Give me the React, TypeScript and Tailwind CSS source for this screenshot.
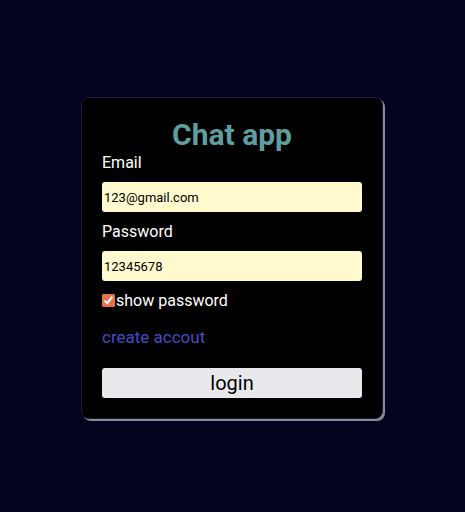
import * as React from 'react';
import { useState } from 'react';

const App: React.FC = () => {
  const [email, setEmail] = useState('123@gmail.com');
  const [password, setPassword] = useState('12345678');
  const [showPassword, setShowPassword] = useState(true);

  return (
    <div className="min-h-screen w-full bg-[#03021f] flex justify-center pt-[97px] pr-[1px] font-['Roboto',sans-serif]">
      <div className="w-[302px] h-[322px] bg-black rounded-lg border border-[#1c1c3a] shadow-[2px_2px_0_#8a8a96] px-5 pt-[19px] flex flex-col">
        <h1 className="text-[30px] leading-[35px] font-bold text-[#5f9ea0] text-center">Chat app</h1>
        <label className="mt-[1px] text-white text-base leading-[19px]">Email</label>
        <input
          value={email}
          onChange={e => setEmail(e.target.value)}
          className="mt-[10px] h-[30px] w-full bg-[#fffacd] rounded-[3px] px-[2px] text-[13px] text-black outline-none"
        />
        <label className="mt-[10px] text-white text-base leading-[19px]">Password</label>
        <input
          type={showPassword ? 'text' : 'password'}
          value={password}
          onChange={e => setPassword(e.target.value)}
          className="mt-[10px] h-[30px] w-full bg-[#fffacd] rounded-[3px] px-[2px] text-[13px] text-black outline-none"
        />
        <label className="mt-[10px] flex items-center text-white text-base leading-[19px]">
          <input
            type="checkbox"
            checked={showPassword}
            onChange={e => setShowPassword(e.target.checked)}
            className="w-[13px] h-[13px] m-0 mr-[1px] accent-[#e9704b]"
          />
          show password
        </label>
        <a href="#" className="mt-[17px] text-[#4a4ac6] text-[17px] leading-[20px] self-start">create accout</a>
        <button className="mt-[21px] h-[30px] w-full bg-[#e9e9ed] rounded-[3px] text-[20px] text-black">login</button>
      </div>
    </div>
  );
};

export default App;
